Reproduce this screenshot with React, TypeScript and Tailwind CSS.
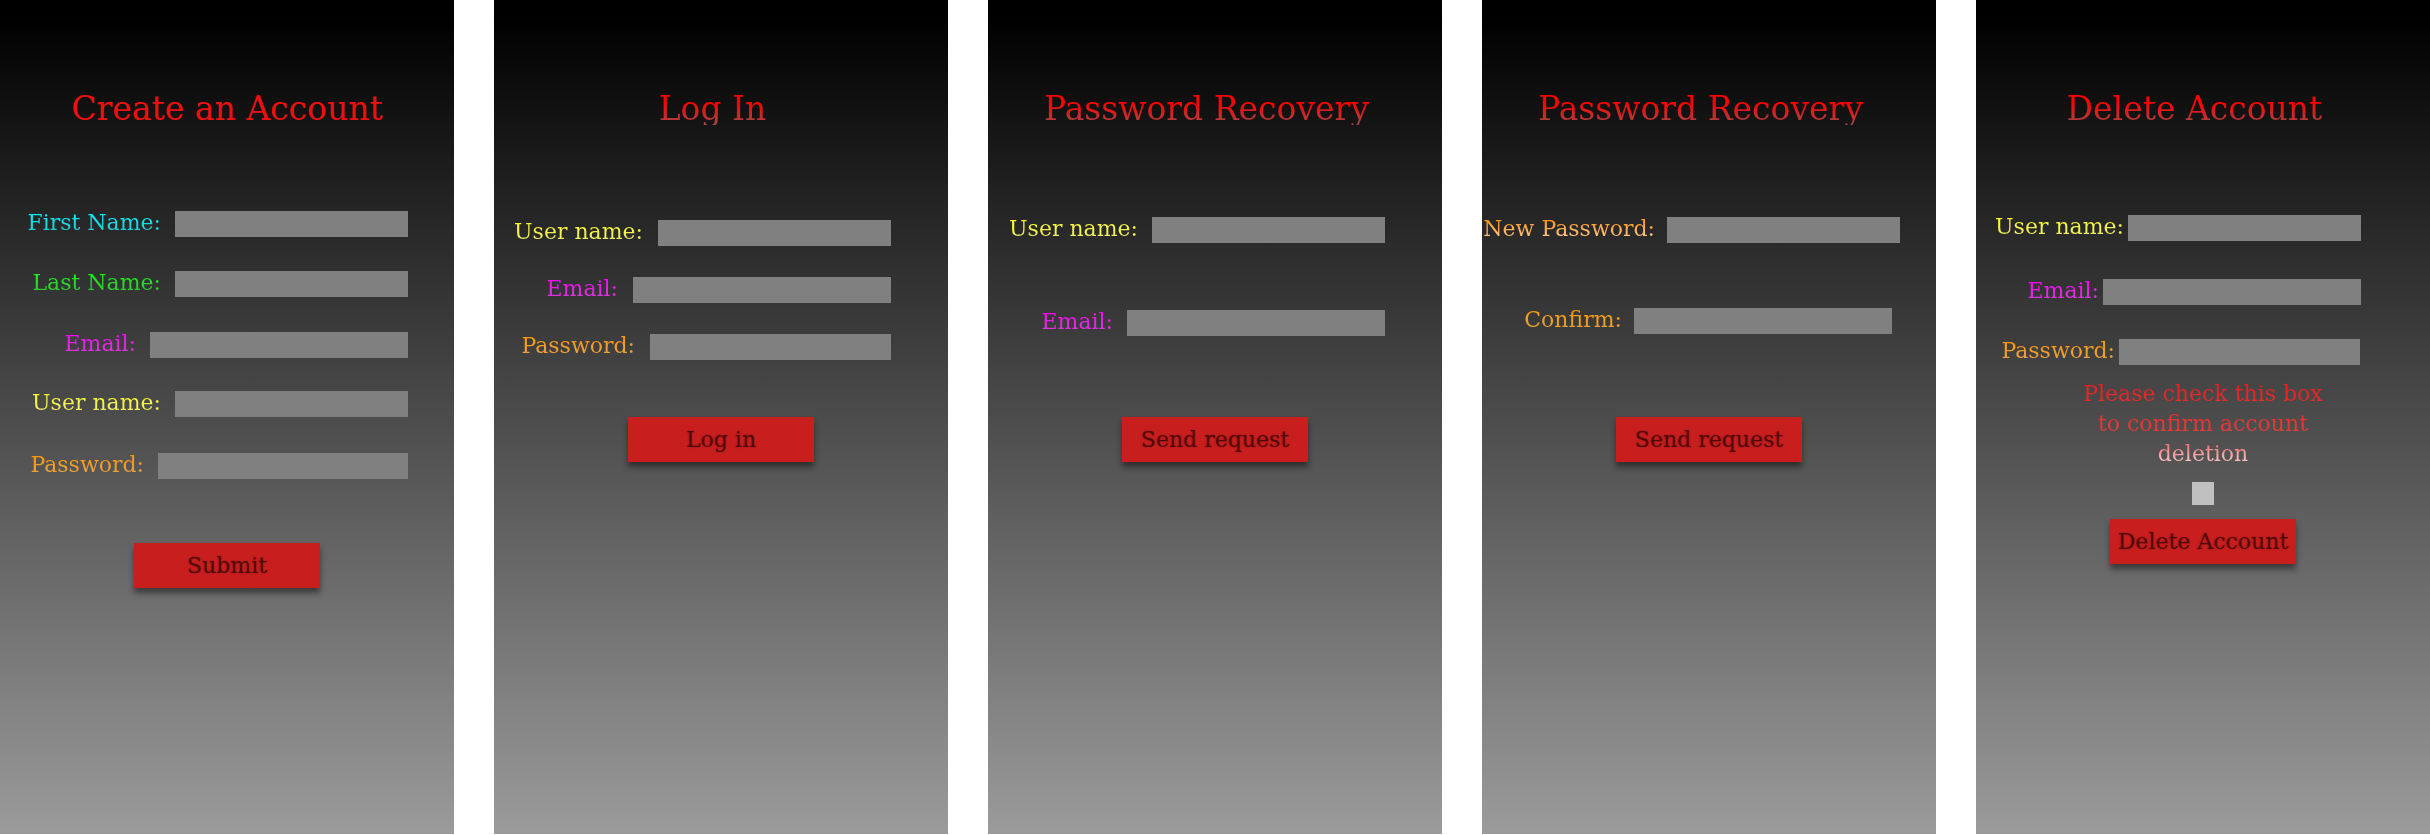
import React from "react";

type Tone = "cyan" | "green" | "magenta" | "yellow" | "orange" | "peach" | "amber";

// text gradients for the coloured labels (bright at the top, slightly muted at the bottom)
const tones: Record<Tone, string> = {
  cyan: "from-[#00f6ff] to-[#30c0c6]",
  green: "from-[#14ff14] to-[#3cb43c]",
  magenta: "from-[#ff00ff] to-[#cc44d0]",
  yellow: "from-[#ffff1e] to-[#e8e878]",
  orange: "from-[#ff9500] to-[#e4a450]",
  peach: "from-[#ff8a00] to-[#ffd2a6]",
  amber: "from-[#ff9a00] to-[#dca444]",
};

interface Row {
  label: string;
  tone: Tone;
  input: string; // width class
  space: string; // margin-top class
  right: string; // padding-right class
}

interface PanelProps {
  title: string;
  titleClass: string;
  rows: Row[];
  gap: string;
  button: string;
  buttonSpace: string;
  children?: React.ReactNode;
}

const serif = "font-['DejaVu_Serif','Liberation_Serif',serif]";

const Label: React.FC<{ text: string; tone: Tone }> = ({ text, tone }) => (
  <span
    className={`${serif} -mt-[3px] text-[22px] leading-[26px] whitespace-nowrap bg-linear-to-b/srgb ${tones[tone]} bg-clip-text text-transparent`}
  >
    {text}
  </span>
);

const RedButton: React.FC<{ text: string; space: string }> = ({ text, space }) => (
  <button
    className={`${space} ${serif} w-[186px] h-[45px] shrink-0 bg-[#c81e1e] text-[22px] leading-none text-[#520909] shadow-[0_5px_6px_rgba(0,0,0,0.45)] [text-shadow:0_0_2px_rgba(60,0,0,0.35)]`}
  >
    {text}
  </button>
);

const Panel: React.FC<PanelProps> = ({ title, titleClass, rows, gap, button, buttonSpace, children }) => (
  <div className="w-[454px] h-[834px] shrink-0 flex flex-col items-center pt-[93px] bg-linear-to-b/srgb from-black from-[2%] to-[#9b9b9b]">
    <h1 className={`${serif} text-[33px] leading-[32px] whitespace-nowrap ${titleClass}`}>{title}</h1>

    {rows.map((row) => (
      <div key={row.label} className={`w-full h-[26px] flex items-center justify-end ${gap} ${row.space} ${row.right}`}>
        <Label text={row.label} tone={row.tone} />
        <input type="text" className={`${row.input} h-[26px] shrink-0 bg-[#808080] border-0 outline-none`} />
      </div>
    ))}

    {children}

    <RedButton text={button} space={buttonSpace} />
  </div>
);

const gradTitle = "pr-[17px] bg-linear-to-b/srgb from-[#ff0000] from-30% to-[#a04848] bg-clip-text text-transparent";

export default function App() {
  return (
    <div className="w-[2430px] h-[835px] flex gap-[40px] bg-white overflow-hidden">
      <Panel
        title="Create an Account"
        titleClass="text-[#ee1010]"
        gap="gap-[14px]"
        button="Submit"
        buttonSpace="mt-[64px]"
        rows={[
          { label: "First Name:", tone: "cyan", input: "w-[233px]", space: "mt-[86px]", right: "pr-[46px]" },
          { label: "Last Name:", tone: "green", input: "w-[233px]", space: "mt-[34px]", right: "pr-[46px]" },
          { label: "Email:", tone: "magenta", input: "w-[258px]", space: "mt-[35px]", right: "pr-[46px]" },
          { label: "User name:", tone: "yellow", input: "w-[233px]", space: "mt-[33px]", right: "pr-[46px]" },
          { label: "Password:", tone: "orange", input: "w-[250px]", space: "mt-[36px]", right: "pr-[46px]" },
        ]}
      />

      <Panel
        title="Log In"
        titleClass={gradTitle}
        gap="gap-[15px]"
        button="Log in"
        buttonSpace="mt-[57px]"
        rows={[
          { label: "User name:", tone: "yellow", input: "w-[233px]", space: "mt-[95px]", right: "pr-[57px]" },
          { label: "Email:", tone: "magenta", input: "w-[258px]", space: "mt-[31px]", right: "pr-[57px]" },
          { label: "Password:", tone: "orange", input: "w-[241px]", space: "mt-[31px]", right: "pr-[57px]" },
        ]}
      />

      <Panel
        title="Password Recovery"
        titleClass={gradTitle}
        gap="gap-[14px]"
        button="Send request"
        buttonSpace="mt-[81px]"
        rows={[
          { label: "User name:", tone: "yellow", input: "w-[233px]", space: "mt-[92px]", right: "pr-[57px]" },
          { label: "Email:", tone: "magenta", input: "w-[258px]", space: "mt-[67px]", right: "pr-[57px]" },
        ]}
      />

      <Panel
        title="Password Recovery"
        titleClass={gradTitle}
        gap="gap-[12px]"
        button="Send request"
        buttonSpace="mt-[83px]"
        rows={[
          { label: "New Password:", tone: "peach", input: "w-[233px]", space: "mt-[92px]", right: "pr-[36px]" },
          { label: "Confirm:", tone: "amber", input: "w-[258px]", space: "mt-[65px]", right: "pr-[44px]" },
        ]}
      />

      <Panel
        title="Delete Account"
        titleClass={gradTitle}
        gap="gap-[4px]"
        button="Delete Account"
        buttonSpace="mt-[14px]"
        rows={[
          { label: "User name:", tone: "yellow", input: "w-[233px]", space: "mt-[90px]", right: "pr-[69px]" },
          { label: "Email:", tone: "magenta", input: "w-[258px]", space: "mt-[38px]", right: "pr-[69px]" },
          { label: "Password:", tone: "orange", input: "w-[241px]", space: "mt-[34px]", right: "pr-[70px]" },
        ]}
      >
        {/* confirmation note + checkbox */}
        <p
          className={`${serif} mt-[14px] text-center text-[22px] leading-[30px] bg-linear-to-b/srgb from-[#e41e1e] via-[#e63c3c] via-60% to-[#ffe8e8] bg-clip-text text-transparent`}
        >
          <span className="block">Please check this box</span>
          <span className="block">to confirm account</span>
          <span className="block">deletion</span>
        </p>
        <input type="checkbox" className="mt-[13px] w-[22px] h-[23px] shrink-0 appearance-none bg-[#c0c0c0] border-0" />
      </Panel>
    </div>
  );
}
